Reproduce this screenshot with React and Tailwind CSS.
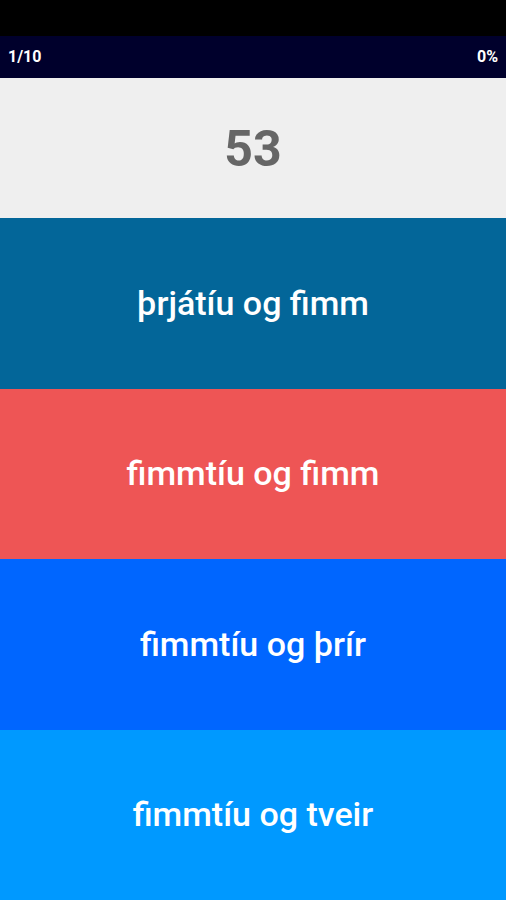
import React from 'react';

const answers = [
  { text: 'þrjátíu og fimm', bg: 'bg-[#036699]' },
  { text: 'fimmtíu og fimm', bg: 'bg-[#ee5555]' },
  { text: 'fimmtíu og þrír', bg: 'bg-[#0066ff]' },
  { text: 'fimmtíu og tveir', bg: 'bg-[#0099ff]' },
];

const App = () => {
  return (
    <div className="h-[900px] w-full flex flex-col font-['Roboto',sans-serif]">
      {/* status bar */}
      <div className="h-[36px] bg-black" />

      {/* progress header */}
      <div className="h-[42px] bg-[#00002c] flex items-center justify-between px-2 text-white text-[16px] font-bold">
        <span>1/10</span>
        <span>0%</span>
      </div>

      {/* question */}
      <div className="h-[140px] bg-[#efefef] flex items-center justify-center pb-[2px]">
        <span className="text-[50px] font-bold text-[#666666] translate-y-[2px]">53</span>
      </div>

      {/* answer options */}
      {answers.map((a) => (
        <button
          key={a.text}
          className={`flex-1 w-full flex items-center justify-center text-white text-[34px] font-medium ${a.bg}`}
        >
          {a.text}
        </button>
      ))}
    </div>
  );
};

export default App;
